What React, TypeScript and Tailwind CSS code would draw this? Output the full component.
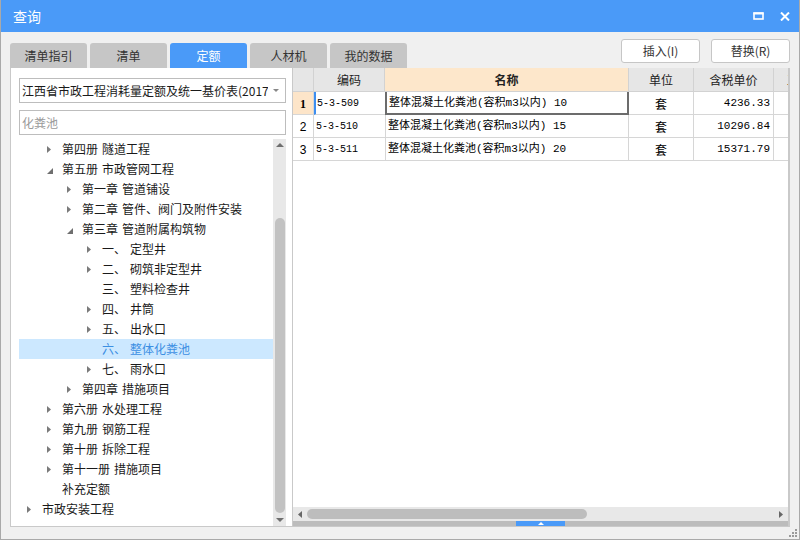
import React from 'react';

type Node = { level: number; text: string; state: 'closed' | 'open' | 'leaf'; selected?: boolean };

const tree: Node[] = [
  { level: 1, text: '第四册 隧道工程', state: 'closed' },
  { level: 1, text: '第五册 市政管网工程', state: 'open' },
  { level: 2, text: '第一章 管道铺设', state: 'closed' },
  { level: 2, text: '第二章 管件、阀门及附件安装', state: 'closed' },
  { level: 2, text: '第三章 管道附属构筑物', state: 'open' },
  { level: 3, text: '一、 定型井', state: 'closed' },
  { level: 3, text: '二、 砌筑非定型井', state: 'closed' },
  { level: 3, text: '三、 塑料检查井', state: 'leaf' },
  { level: 3, text: '四、 井筒', state: 'closed' },
  { level: 3, text: '五、 出水口', state: 'closed' },
  { level: 3, text: '六、 整体化粪池', state: 'leaf', selected: true },
  { level: 3, text: '七、 雨水口', state: 'closed' },
  { level: 2, text: '第四章 措施项目', state: 'closed' },
  { level: 1, text: '第六册 水处理工程', state: 'closed' },
  { level: 1, text: '第九册 钢筋工程', state: 'closed' },
  { level: 1, text: '第十册 拆除工程', state: 'closed' },
  { level: 1, text: '第十一册 措施项目', state: 'closed' },
  { level: 1, text: '补充定额', state: 'leaf' },
  { level: 0, text: '市政安装工程', state: 'closed' },
];

const rows = [
  { code: '5-3-509', name: '整体混凝土化粪池(容积m3以内) 10', price: '4236.33' },
  { code: '5-3-510', name: '整体混凝土化粪池(容积m3以内) 15', price: '10296.84' },
  { code: '5-3-511', name: '整体混凝土化粪池(容积m3以内) 20', price: '15371.79' },
];

const tabs = ['清单指引', '清单', '定额', '人材机', '我的数据'];

const cjk = { fontFamily: '"Noto Sans CJK SC", sans-serif' };
const mono = { fontFamily: '"Liberation Mono", "Noto Sans CJK SC", monospace' };

function Arrow({ state }: { state: Node['state'] }) {
  if (state === 'leaf') return null;
  if (state === 'open')
    return (
      <svg width="6" height="6" viewBox="0 0 6 6" className="mt-[3px]">
        <path d="M6 0 L6 6 L0 6 Z" fill="#6f6f6f" />
      </svg>
    );
  return (
    <svg width="4" height="7" viewBox="0 0 4 7">
      <path d="M0 0 L4 3.5 L0 7 Z" fill="#7a7a7a" />
    </svg>
  );
}

function TreeRow({ node }: { node: Node }) {
  const parts = node.text.split(' ');
  return (
    <div
      className={`flex items-center h-[20px] text-[12px] leading-[20px] ${
        node.selected ? 'bg-[#cce8ff] text-[#3c8fe3]' : 'text-[#1a1a1a]'
      }`}
      style={{ paddingLeft: node.level * 20 }}
    >
      <span className="w-[23px] shrink-0 pl-[8px] flex items-center">
        <Arrow state={node.state} />
      </span>
      <span className="flex gap-[4px] whitespace-nowrap">
        {parts.map((p, i) => (
          <span key={i}>{p}</span>
        ))}
      </span>
    </div>
  );
}

export default function App() {
  return (
    <div
      className="w-[800px] h-[540px] bg-[#f0f0f0] border-x border-b border-[#a9a9a9] flex flex-col relative overflow-hidden"
      style={cjk}
    >
      {/* title bar */}
      <div className="h-[32px] shrink-0 bg-[#4a9af8] flex items-center justify-between pl-[12px] pr-[9px]">
        <span className="text-white text-[14px] leading-none">查询</span>
        <div className="flex items-center gap-[16px]">
          <svg width="11" height="8" viewBox="0 0 11 8">
            <rect x="1" y="1" width="9" height="6" fill="none" stroke="#fff" strokeWidth="1.6" />
            <rect x="0.5" y="0.5" width="10" height="2" fill="#fff" />
          </svg>
          <svg width="10" height="9" viewBox="0 0 10 9">
            <path d="M1 0.5 L9 8.5 M9 0.5 L1 8.5" stroke="#fff" strokeWidth="2" />
          </svg>
        </div>
      </div>

      <div className="flex-1 flex flex-col pl-[9px] pr-[9px]">
        {/* tabs + buttons */}
        <div className="h-[36px] shrink-0 flex justify-between">
          <div className="flex items-end gap-[3px]">
            {tabs.map((t) => (
              <div
                key={t}
                className={`w-[77px] h-[25px] rounded-t-[3px] flex items-center justify-center text-[12px] ${
                  t === '定额' ? 'bg-[#4a9af8] text-white' : 'bg-[#c6c6c6] text-[#333]'
                }`}
              >
                {t}
              </div>
            ))}
          </div>
          <div className="flex gap-[11px] pt-[7px]">
            {['插入(I)', '替换(R)'].map((b) => (
              <div
                key={b}
                className="w-[79px] h-[24px] bg-white border border-[#c6c6c6] rounded-[3px] flex items-center justify-center text-[12px] text-[#333]"
              >
                {b}
              </div>
            ))}
          </div>
        </div>

        {/* main */}
        <div className="h-[459px] shrink-0 flex">
          {/* left panel */}
          <div className="w-[283px] shrink-0 bg-white border border-t-0 border-[#c9c9c9] flex flex-col pl-[8px] pr-[6px] pt-[10px]">
            <div className="h-[25px] shrink-0 border border-[#bdbdbd] flex items-center pl-[2px] pr-[6px]">
              <span className="flex-1 overflow-hidden whitespace-nowrap text-[12px] text-[#1a1a1a]">
                江西省市政工程消耗量定额及统一基价表(2017版)
              </span>
              <svg width="6" height="3" viewBox="0 0 6 3" className="ml-[5px]">
                <path d="M0 0 L6 0 L3 3 Z" fill="#888" />
              </svg>
            </div>
            <div className="h-[25px] shrink-0 mt-[7px] border border-[#bdbdbd] flex items-center pl-[2px] text-[12px] text-[#9a9a9a]">
              化粪池
            </div>
            <div className="flex-1 mt-[4px] flex min-h-0">
              <div className="flex-1 flex flex-col">
                {tree.map((n, i) => (
                  <TreeRow key={i} node={n} />
                ))}
              </div>
              <div className="w-[13px] shrink-0 bg-[#e8e8e8] flex flex-col items-center">
                <div className="h-[12px] flex items-center justify-center">
                  <svg width="8" height="4" viewBox="0 0 8 4">
                    <path d="M0 4 L4 0 L8 4 Z" fill="#6f6f6f" />
                  </svg>
                </div>
                <div className="h-[67px]" />
                <div className="w-[10px] h-[295px] rounded-full bg-[#c2c2c2]" />
                <div className="flex-1" />
                <div className="h-[12px] flex items-center justify-center">
                  <svg width="8" height="4" viewBox="0 0 8 4">
                    <path d="M0 0 L8 0 L4 4 Z" fill="#6f6f6f" />
                  </svg>
                </div>
              </div>
            </div>
          </div>

          {/* grid */}
          <div className="flex-1 bg-white border-r-[2px] border-b border-[#c9c9c9] flex flex-col min-w-0">
            <div className="flex h-[24px] shrink-0 text-[12px] text-[#222] overflow-hidden">
              <div className="w-[21px] shrink-0 bg-[#e6e6e6] border-r border-b border-[#d2d2d2]" />
              <div className="w-[71px] shrink-0 bg-[#e6e6e6] border-r border-b border-[#d2d2d2] flex items-center justify-center">编码</div>
              <div className="w-[244px] shrink-0 bg-[#fde7cb] border-r border-b border-[#d2d2d2] flex items-center justify-center font-bold">名称</div>
              <div className="w-[65px] shrink-0 bg-[#e6e6e6] border-r border-b border-[#d2d2d2] flex items-center justify-center">单位</div>
              <div className="w-[80px] shrink-0 bg-[#e6e6e6] border-r border-b border-[#d2d2d2] flex items-center justify-center">含税单价</div>
              <div className="w-[60px] shrink-0 bg-[#e6e6e6] border-b border-[#d2d2d2] flex items-center pl-[13px] whitespace-nowrap">工程量</div>
            </div>
            {rows.map((r, i) => (
              <div key={r.code} className="flex h-[23px] shrink-0 overflow-hidden">
                <div
                  className={`w-[21px] shrink-0 border-r border-b border-[#d6d6d6] flex items-center justify-center pt-[1px] text-[12px] ${
                    i === 0 ? 'bg-[#fde5c9] font-bold' : 'bg-white'
                  }`}
                  style={{ fontFamily: i === 0 ? '"Liberation Serif", serif' : '"Liberation Sans", sans-serif' }}
                >
                  {i + 1}
                </div>
                <div
                  className={`w-[71px] shrink-0 border-b border-[#d6d6d6] flex items-center pt-[1px] text-[10px] text-black ${
                    i === 0 ? 'border-l-[2px] border-l-[#3d8ef0] pl-[1px]' : 'pl-[2px]'
                  }`}
                  style={mono}
                >
                  {r.code}
                </div>
                <div
                  className={`w-[244px] shrink-0 flex items-center pl-[2px] text-[11px] text-black whitespace-nowrap ${
                    i === 0
                      ? 'border-x-[2px] border-b-[2px] border-[#6c6c6c] pt-[2px]'
                      : 'border-x border-b border-[#d6d6d6] pt-[1px]'
                  }`}
                  style={mono}
                >
                  {r.name}
                </div>
                <div className="w-[65px] shrink-0 border-r border-b border-[#d6d6d6] flex items-center justify-center pt-[1px] text-[12px] text-black">
                  套
                </div>
                <div
                  className="w-[80px] shrink-0 border-r border-b border-[#d6d6d6] flex items-center justify-end pr-[3px] pt-[1px] text-[11px] text-black"
                  style={mono}
                >
                  {r.price}
                </div>
                <div className="w-[60px] shrink-0 border-b border-[#d6d6d6]" />
              </div>
            ))}
            <div className="flex-1" />
            {/* horizontal scrollbar */}
            <div className="h-[14px] shrink-0 bg-[#e8e8e8] flex items-center">
              <div className="w-[14px] shrink-0 flex items-center justify-center">
                <svg width="4" height="7" viewBox="0 0 4 7">
                  <path d="M4 0 L0 3.5 L4 7 Z" fill="#666" />
                </svg>
              </div>
              <div className="w-[280px] h-[10px] rounded-full bg-[#bdbdbd]" />
              <div className="flex-1" />
              <div className="w-[14px] shrink-0 flex items-center justify-center">
                <svg width="4" height="7" viewBox="0 0 4 7">
                  <path d="M0 0 L4 3.5 L0 7 Z" fill="#666" />
                </svg>
              </div>
            </div>
            <div className="h-[5px] shrink-0 bg-[#bcbcbc] flex">
              <div className="w-[223px]" />
              <div className="w-[49px] bg-[#4a9af8] flex items-center justify-center">
                <svg width="6" height="3" viewBox="0 0 6 3">
                  <path d="M0 3 L3 0 L6 3 Z" fill="#fff" />
                </svg>
              </div>
            </div>
          </div>
        </div>
      </div>

      {/* resize grip */}
      <svg width="9" height="9" viewBox="0 0 9 9" className="absolute right-[2px] bottom-[2px]">
        {[
          [7, 1],
          [4, 4],
          [7, 4],
          [1, 7],
          [4, 7],
          [7, 7],
        ].map(([x, y], i) => (
          <rect key={i} x={x} y={y} width="2" height="2" fill="#9a9a9a" />
        ))}
      </svg>
    </div>
  );
}
